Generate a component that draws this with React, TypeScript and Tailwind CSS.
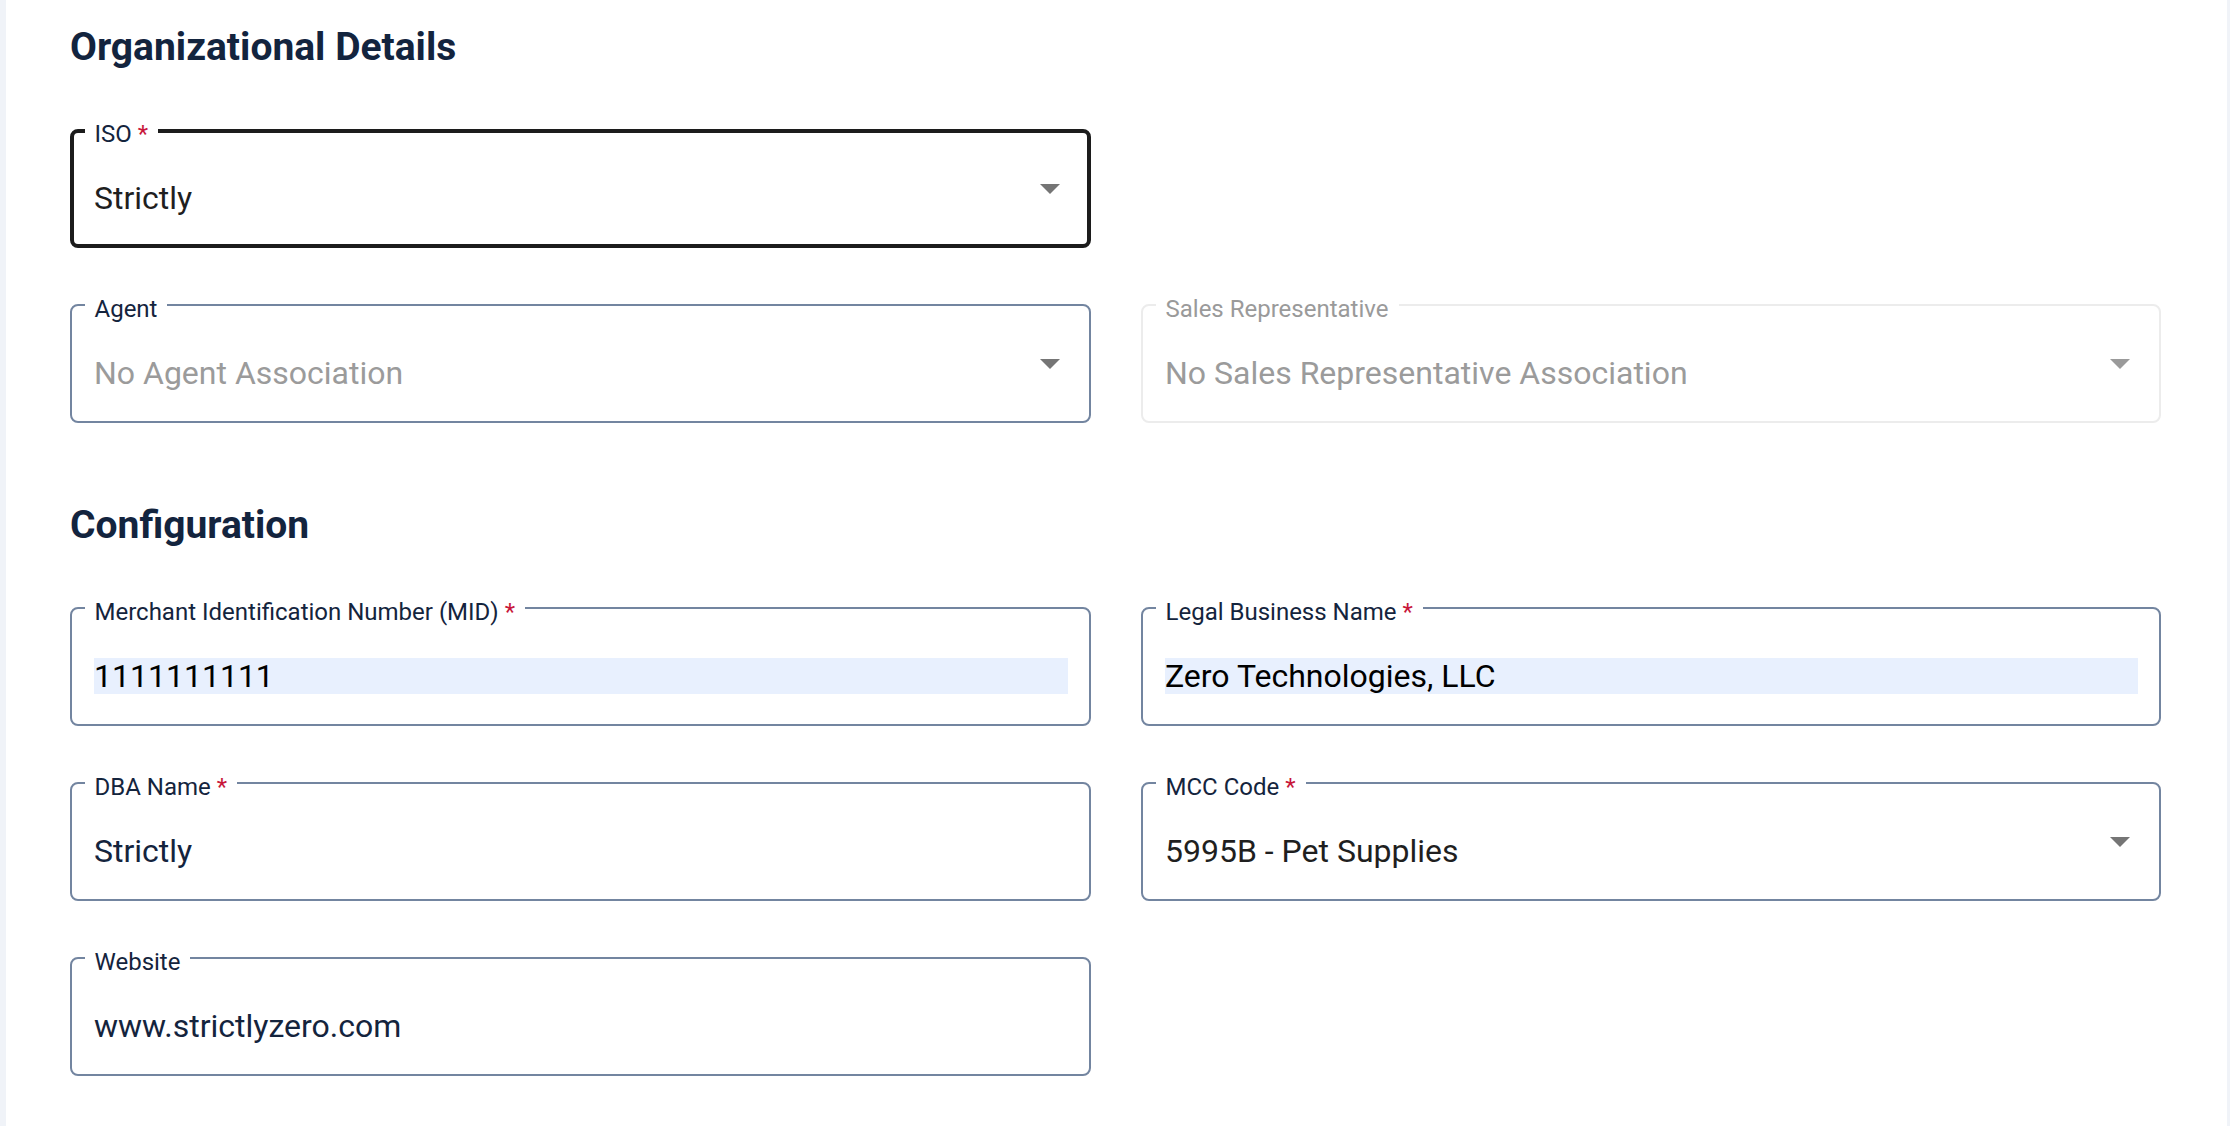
import React from "react";

type FieldProps = {
  label: string;
  required?: boolean;
  value: string;
  select?: boolean;
  focused?: boolean;
  disabled?: boolean;
  autofill?: boolean;
  placeholder?: boolean;
  valueColor?: string;
};

function Arrow({ color }: { color: string }) {
  return (
    <svg width="20" height="10" viewBox="0 0 20 10" className="shrink-0">
      <path d="M0 0H20L10 10Z" fill={color} />
    </svg>
  );
}

function Field({ label, required, value, select, focused, disabled, autofill, placeholder, valueColor }: FieldProps) {
  const borderCls = focused
    ? "border-[4px] border-[#1c1c1c]"
    : disabled
    ? "border-[2px] border-[#ececec]"
    : "border-[2px] border-[#7385a0]";
  const labelColor = disabled ? "text-[#9a9a9a]" : "text-[#14243d]";
  const textColor = disabled || placeholder ? "text-[#9b9b9b]" : valueColor ?? "text-[#14243d]";
  return (
    <div className={`relative h-[119px] rounded-[8px] bg-white ${borderCls}`}>
      <span
        className={`absolute ${focused ? "left-[10.5px] -top-[11px]" : "left-[12.5px] -top-[9px]"} bg-white px-[10px] text-[24px] leading-[24px] whitespace-nowrap ${labelColor}`}
      >
        {label}
        {required && <span className="text-[#c8163a]"> *</span>}
      </span>
      <div className={`flex h-full items-center ${focused ? "pl-[20px] pr-[27px]" : select ? "pl-[22px] pr-[29px]" : "pl-[22px] pr-[21px]"}`}>
        <div className="mt-[19px] flex-1 min-w-0">
          <div
            className={`h-[36px] text-[32px] leading-[36px] whitespace-nowrap ${textColor} ${autofill ? "bg-[#e8f0fe] text-black" : ""}`}
          >
            {value}
          </div>
        </div>
        {select && <Arrow color={disabled ? "#9a9a9a" : "#757575"} />}
      </div>
    </div>
  );
}

export default function App() {
  return (
    <div className="min-h-[1126px] bg-[#f0f3f8] pl-[6px] pr-[3px] font-['Roboto','Liberation_Sans',sans-serif]">
      <div className="min-h-[1126px] bg-white pl-[64px] pt-[22.5px]">
        <h2 className="text-[39px] leading-[48px] font-bold text-[#13243e]">Organizational Details</h2>
        <div className="mt-[58.5px] grid w-[2091px] grid-cols-[1021px_1020px] gap-x-[50px] gap-y-[56px]">
          <Field label="ISO" required value="Strictly" select focused valueColor="text-[#1f1f1f]" />
          <div />
          <Field label="Agent" value="No Agent Association" select placeholder />
          <Field label="Sales Representative" value="No Sales Representative Association" select disabled />
        </div>
        <h2 className="mt-[78px] text-[39px] leading-[48px] font-bold text-[#13243e]">Configuration</h2>
        <div className="mt-[58px] grid w-[2091px] grid-cols-[1021px_1020px] gap-x-[50px] gap-y-[56px]">
          <Field label="Merchant Identification Number (MID)" required value="1111111111" autofill />
          <Field label="Legal Business Name" required value="Zero Technologies, LLC" autofill />
          <Field label="DBA Name" required value="Strictly" />
          <Field label="MCC Code" required value="5995B - Pet Supplies" select valueColor="text-[#1f1f1f]" />
          <Field label="Website" value="www.strictlyzero.com" />
        </div>
      </div>
    </div>
  );
}
